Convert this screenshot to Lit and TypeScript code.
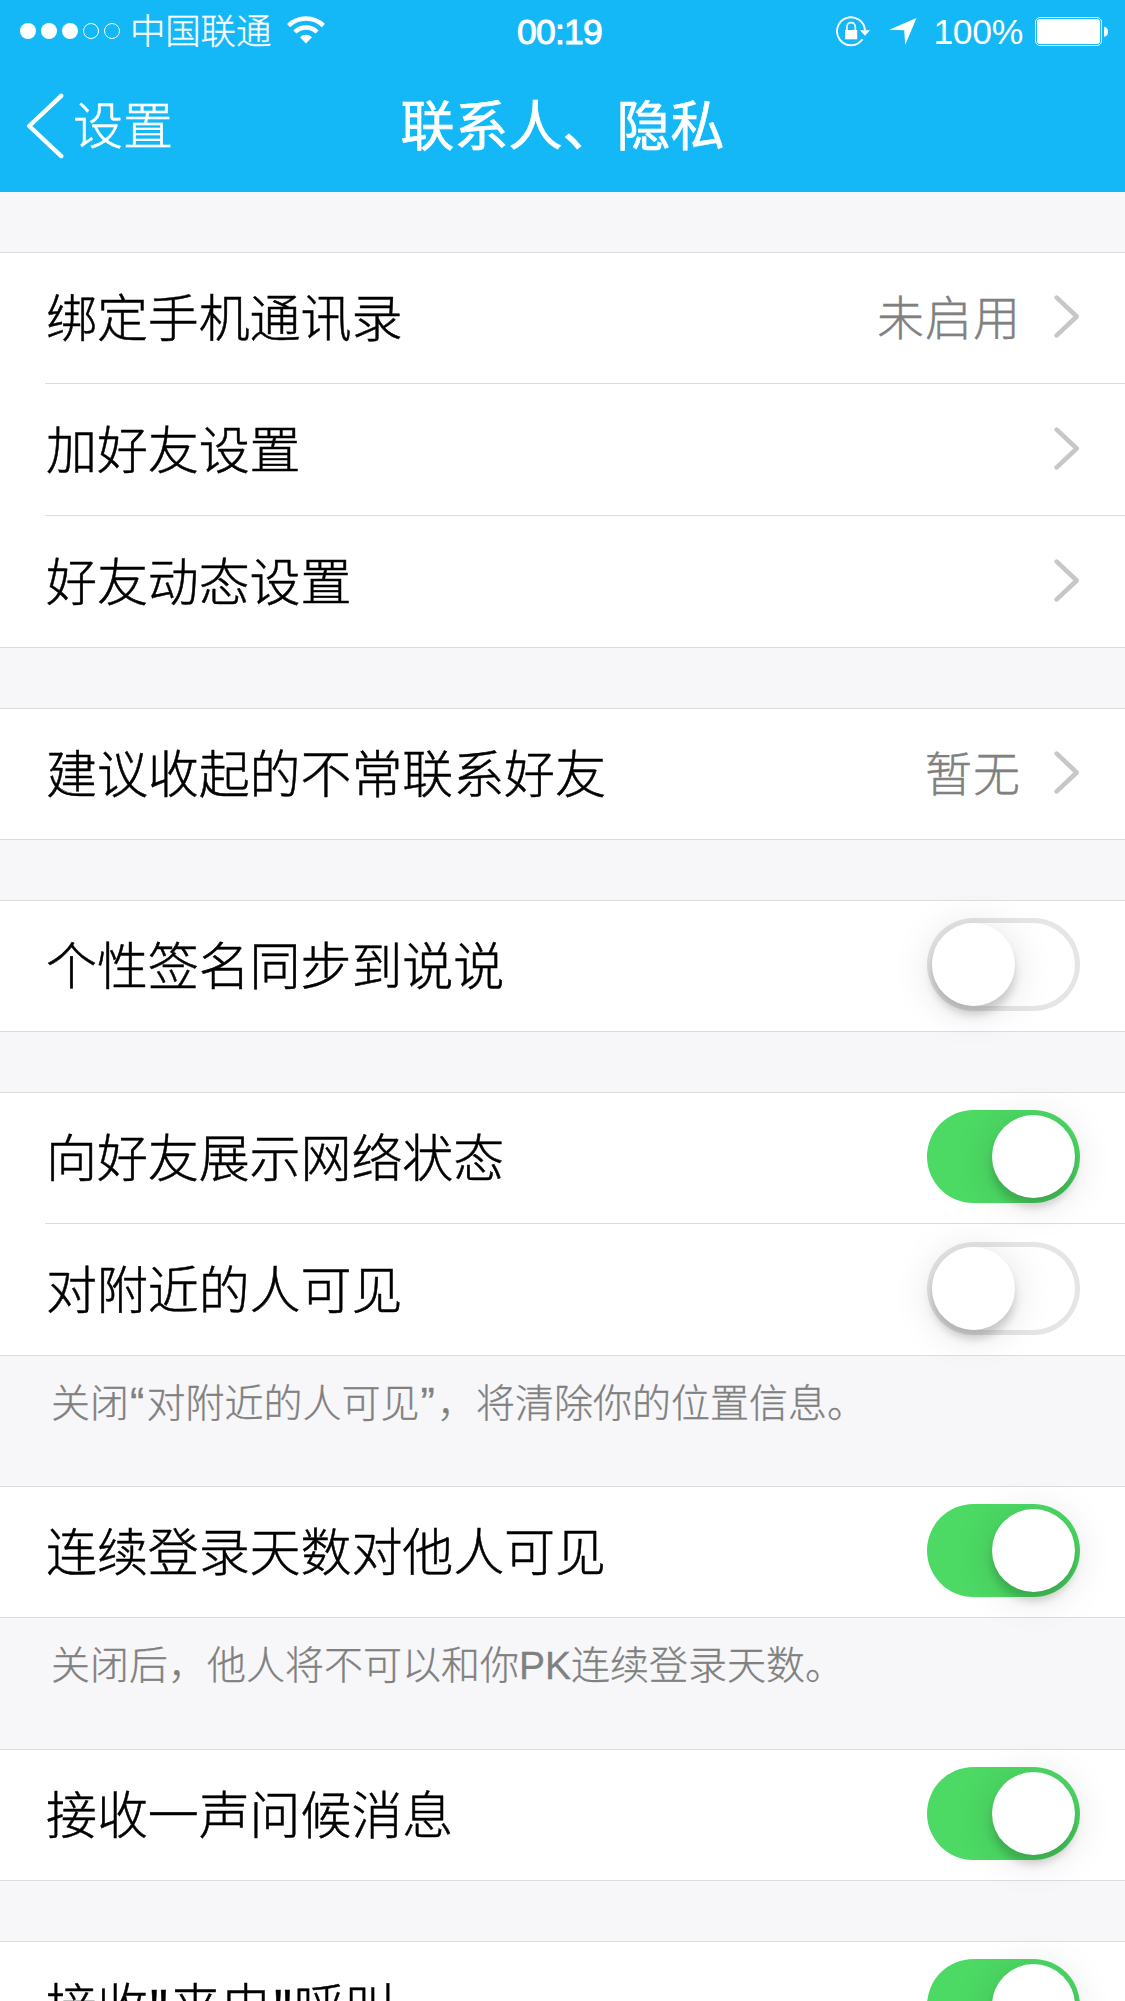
import { LitElement, html, css, svg, nothing } from "lit";
import { customElement, property } from "lit/decorators.js";

interface Row {
  label: string;
  kind: "link" | "switch";
  value?: string;
  on?: boolean;
}

interface Group {
  rows: Row[];
  note?: string;
}

const GROUPS: Group[] = [
  {
    rows: [
      { label: "绑定手机通讯录", kind: "link", value: "未启用" },
      { label: "加好友设置", kind: "link" },
      { label: "好友动态设置", kind: "link" },
    ],
  },
  { rows: [{ label: "建议收起的不常联系好友", kind: "link", value: "暂无" }] },
  { rows: [{ label: "个性签名同步到说说", kind: "switch", on: false }] },
  {
    rows: [
      { label: "向好友展示网络状态", kind: "switch", on: true },
      { label: "对附近的人可见", kind: "switch", on: false },
    ],
    note: "关闭“对附近的人可见”，将清除你的位置信息。",
  },
  {
    rows: [{ label: "连续登录天数对他人可见", kind: "switch", on: true }],
    note: "关闭后，他人将不可以和你PK连续登录天数。",
  },
  { rows: [{ label: "接收一声问候消息", kind: "switch", on: true }] },
  { rows: [{ label: '接收"来电"呼叫', kind: "switch", on: true }] },
];

/** Gives quotation marks a little extra room beside the ideographs. */
const spaceQuotes = (text: string) =>
  text
    .split(/([“”"])/)
    .map((part) => (/^[“”"]$/.test(part) ? html`<span class="quote">${part}</span>` : part));

@customElement("ios-switch")
export class IosSwitch extends LitElement {
  @property({ type: Boolean, reflect: true }) on = false;

  static styles = css`
    :host {
      display: flex;
      box-sizing: border-box;
      width: 153px;
      height: 93px;
      flex: none;
      padding: 5px;
      border-radius: 46.5px;
      background: #fff;
      box-shadow: inset 0 0 0 5px #e5e5e5;
    }
    :host([on]) {
      justify-content: flex-end;
      background: #4cd964;
      box-shadow: none;
    }
    .knob {
      width: 83px;
      height: 83px;
      border-radius: 50%;
      background: #fff;
      box-shadow: 0 9px 9px rgba(0, 0, 0, 0.16), 0 5px 40px rgba(0, 0, 0, 0.13);
    }
  `;

  render() {
    return html`<div class="knob"></div>`;
  }
}

@customElement("status-bar")
export class StatusBar extends LitElement {
  static styles = css`
    :host {
      display: grid;
      grid-template-columns: 1fr auto 1fr;
      align-items: center;
      height: 60px;
      padding: 0 17px 0 20px;
      color: #fff;
      font-size: 36px;
      line-height: 60px;
    }
    svg {
      display: block;
      flex: none;
    }
    .left,
    .right {
      display: flex;
      align-items: center;
    }
    .right {
      justify-content: flex-end;
    }
    .carrier {
      margin-left: 10px;
      padding-top: 1px;
      font-size: 35.5px;
      font-weight: 300;
      letter-spacing: -0.2px;
      -webkit-text-stroke: 0.3px #fff;
    }
    .wifi {
      margin: 0 0 2px 16px;
    }
    .time {
      padding: 2px 9px 0 0;
      font-family: "Liberation Sans", sans-serif;
      font-size: 35.5px;
      letter-spacing: -0.8px;
      -webkit-text-stroke: 1px #fff;
    }
    .lock {
      margin-right: 18px;
    }
    .percent {
      margin: 2px 12px 0 16px;
      font-family: "Liberation Sans", sans-serif;
      font-size: 35.5px;
      letter-spacing: -0.3px;
    }
  `;

  render() {
    const dots = [0, 1, 2, 3, 4].map((i) =>
      i < 3
        ? svg`<circle cx=${8 + i * 21} cy="8" r="8" fill="#fff"/>`
        : svg`<circle cx=${8 + i * 21} cy="8" r="7.5" fill="none" stroke="#fff" stroke-width="1"/>`
    );
    return html`
      <div class="left">
        <svg width="100" height="16" viewBox="0 0 100 16">${dots}</svg>
        <span class="carrier">中国联通</span>
        <svg class="wifi" width="38" height="28" viewBox="0 0 38 28">
          <g fill="none" stroke="#fff" stroke-width="4.4">
            <path d="M1.6 9.6A25 25 0 0 1 36.4 9.6" />
            <path d="M7.9 16A16 16 0 0 1 30.1 16" />
          </g>
          <path d="M19 27.4L13 21.2A8.6 8.6 0 0 1 25 21.2Z" fill="#fff" />
        </svg>
      </div>
      <div class="time">00:19</div>
      <div class="right">
        <svg class="lock" width="35" height="31" viewBox="0 0 35 31">
          <path d="M26.5 23.3A14 14 0 1 1 29 14.5" fill="none" stroke="#fff" stroke-width="1.9" />
          <path d="M24 14.3H34L29 19.8Z" fill="#fff" />
          <rect x="9" y="14" width="12.2" height="9.3" fill="#fff" />
          <path d="M10.9 15V10.9A4.2 4.2 0 0 1 19.3 10.9V15" fill="none" stroke="#fff" stroke-width="1.7" />
        </svg>
        <svg class="arrow" width="28" height="27" viewBox="0 0 28 27">
          <path d="M27.5 0L16.2 27L15.2 12.3L0.2 11.8Z" fill="#fff" />
        </svg>
        <span class="percent">100%</span>
        <svg width="73" height="29" viewBox="0 0 73 29">
          <rect x="0.5" y="0.5" width="66" height="28" rx="4.5" fill="none" stroke="#fff" />
          <rect x="2" y="2" width="63" height="25" rx="3.2" fill="#fff" />
          <path d="M69 9.8C71.8 10.2 73 12 73 14.8S71.8 19.4 69 19.8Z" fill="#fff" />
        </svg>
      </div>
    `;
  }
}

@customElement("settings-row")
export class SettingsRow extends LitElement {
  @property({ attribute: false }) row!: Row;

  static styles = css`
    :host {
      display: flex;
      align-items: center;
      box-sizing: border-box;
      height: 130px;
      padding: 0 45px 3px 46px;
      background: #fff;
    }
    .label {
      flex: 1;
      padding-top: 6px;
      color: #000;
      font-size: 51px;
      font-weight: 300;
      line-height: 60px;
      letter-spacing: -0.1px;
      white-space: nowrap;
      -webkit-text-stroke: 0.5px #000;
    }
    .quote {
      margin: 0 2px;
    }
    .value {
      margin-right: 33px;
      padding-top: 4px;
      color: #808080;
      font-size: 47px;
      font-weight: 300;
      line-height: 60px;
      letter-spacing: 1px;
      -webkit-text-stroke: 0.4px #808080;
    }
    .chevron {
      display: block;
      flex: none;
    }
  `;

  render() {
    const { label, kind, value, on } = this.row;
    return html`
      <span class="label">${spaceQuotes(label)}</span>
      ${value ? html`<span class="value">${value}</span>` : nothing}
      ${kind === "link"
        ? html`<svg class="chevron" width="26" height="43" viewBox="0 0 26 43">
            <path
              d="M2.7 2.6L22.7 21.5L2.7 40.4"
              fill="none"
              stroke="#c7c7c7"
              stroke-width="4.6"
              stroke-linecap="round"
              stroke-linejoin="round"
            />
          </svg>`
        : html`<ios-switch ?on=${on}></ios-switch>`}
    `;
  }
}

@customElement("app-root")
export class AppRoot extends LitElement {
  static styles = css`
    :host {
      display: block;
      height: 2001px;
      overflow: hidden;
      background: #f7f7f9;
      font-family: "Liberation Sans", "Noto Sans CJK SC", sans-serif;
    }
    .top {
      height: 192px;
      background: #14b8f7;
      color: #fff;
    }
    .nav {
      display: grid;
      grid-template-columns: 1fr auto 1fr;
      align-items: center;
      height: 132px;
    }
    .back {
      display: flex;
      align-items: center;
      gap: 9px;
      padding-left: 26px;
      font-size: 50px;
      font-weight: 300;
      line-height: 60px;
      -webkit-text-stroke: 0.5px #fff;
    }
    .back-label {
      padding-top: 2px;
    }
    .title {
      margin: 0;
      padding-top: 2px;
      font-size: 54px;
      font-weight: 400;
      line-height: 60px;
      -webkit-text-stroke: 0.7px #fff;
    }
    .group {
      margin-top: 60px;
      border-top: 1px solid #dcdcdf;
      border-bottom: 1px solid #dcdcdf;
      background: #fff;
    }
    .noted {
      margin-top: 0;
    }
    .item + .item::before {
      content: "";
      display: block;
      height: 1px;
      margin: 0 0 1px 45px;
      background: #dcdcdf;
    }
    .note {
      box-sizing: border-box;
      height: 130px;
      margin: 0;
      padding: 18px 51px 0;
      color: #808080;
      font-size: 39px;
      font-weight: 300;
      line-height: 60px;
      white-space: nowrap;
      -webkit-text-stroke: 0.3px #808080;
    }
    .note.tall {
      height: 131px;
    }
    .note .quote {
      margin: 0 2.2px 0 1px;
      font-size: 43px;
      line-height: 1;
    }
  `;

  render() {
    return html`
      <header class="top">
        <status-bar></status-bar>
        <nav class="nav">
          <div class="back">
            <svg width="38" height="66" viewBox="0 0 38 66">
              <path
                d="M35.2 2.8L3.2 33L35.2 63.2"
                fill="none"
                stroke="#fff"
                stroke-width="4.4"
                stroke-linecap="round"
                stroke-linejoin="round"
              />
            </svg>
            <span class="back-label">设置</span>
          </div>
          <h1 class="title">联系人、隐私</h1>
        </nav>
      </header>
      <main>
        ${GROUPS.map(
          (g, i) => html`
            <section class="group ${GROUPS[i - 1]?.note ? "noted" : ""}">
              ${g.rows.map(
                (r) => html`<div class="item"><settings-row .row=${r}></settings-row></div>`
              )}
            </section>
            ${g.note
              ? html`<p class="note ${g.rows.length === 1 ? "tall" : ""}">${spaceQuotes(g.note)}</p>`
              : nothing}
          `
        )}
      </main>
    `;
  }
}
